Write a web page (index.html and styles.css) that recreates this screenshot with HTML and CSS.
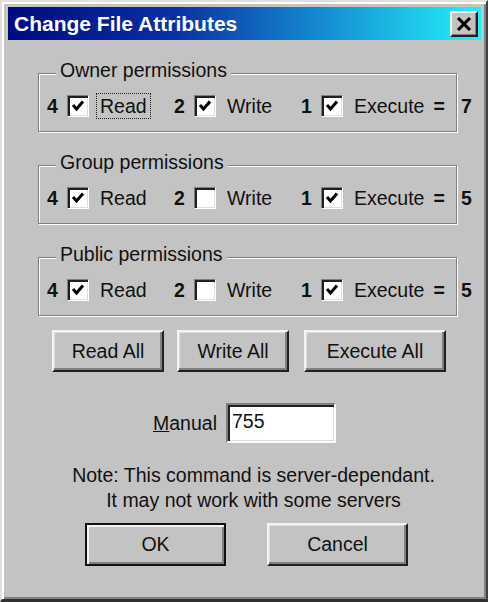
FILE: index.html
```html
<!DOCTYPE html>
<html lang="en">

<head>
    <meta charset="UTF-8">
    <meta name="viewport" content="width=device-width, initial-scale=1.0">
    <title>Change File Attributes</title>
    <link rel="stylesheet" href="styles.css">
</head>

<body>
    <div class="window">
        <div class="titlebar">
            <span class="title">Change File Attributes</span>
            <button class="close" aria-label="Close">
                <svg width="16" height="14" viewBox="0 0 16 14">
                    <path d="M2 1 L14 13 M14 1 L2 13" stroke="#000" stroke-width="3" fill="none" />
                </svg>
            </button>
        </div>

        <div class="group-row">
            <fieldset class="group">
                <legend>Owner permissions</legend>
                <div class="perms">
                    <div class="perm"><b>4</b><span class="check on"></span><span class="label focus">Read</span></div>
                    <div class="perm"><b>2</b><span class="check on"></span><span class="label">Write</span></div>
                    <div class="perm"><b>1</b><span class="check on"></span><span class="label">Execute</span><b class="eq">=</b></div>
                </div>
            </fieldset>
            <b class="total">7</b>
        </div>

        <div class="group-row">
            <fieldset class="group">
                <legend>Group permissions</legend>
                <div class="perms">
                    <div class="perm"><b>4</b><span class="check on"></span><span class="label">Read</span></div>
                    <div class="perm"><b>2</b><span class="check"></span><span class="label">Write</span></div>
                    <div class="perm"><b>1</b><span class="check on"></span><span class="label">Execute</span><b class="eq">=</b></div>
                </div>
            </fieldset>
            <b class="total">5</b>
        </div>

        <div class="group-row">
            <fieldset class="group">
                <legend>Public permissions</legend>
                <div class="perms">
                    <div class="perm"><b>4</b><span class="check on"></span><span class="label">Read</span></div>
                    <div class="perm"><b>2</b><span class="check"></span><span class="label">Write</span></div>
                    <div class="perm"><b>1</b><span class="check on"></span><span class="label">Execute</span><b class="eq">=</b></div>
                </div>
            </fieldset>
            <b class="total">5</b>
        </div>

        <div class="all-buttons">
            <button class="btn short">Read All</button>
            <button class="btn short">Write All</button>
            <button class="btn long">Execute All</button>
        </div>

        <div class="manual">
            <label for="mode"><u>M</u>anual</label>
            <input type="text" id="mode" value="755">
        </div>

        <p class="note">Note: This command is server-dependant.<br>It may not work with some servers</p>

        <div class="actions">
            <button class="btn wide default">OK</button>
            <button class="btn wide">Cancel</button>
        </div>
    </div>
</body>

</html>
```

FILE: styles.css
```css
body {
    margin: 0;
    background-color: #c3c3c3;
    font-family: "Liberation Sans", Arial, sans-serif;
    font-size: 19.5px;
    color: #111;
}

.window {
    width: 488px;
    height: 602px;
    box-sizing: border-box;
    background-color: #c3c3c3;
    border-style: solid;
    border-width: 2px 2px 3px 2px;
    border-color: #dfdfdf #404040 #303030 #dfdfdf;
    box-shadow: inset 2px 2px 0 #fff, inset -2px -2px 0 #808080;
    padding: 5px 5px 0 6px;
    display: flex;
    flex-direction: column;
}

.titlebar {
    height: 33px;
    display: flex;
    align-items: center;
    justify-content: space-between;
    padding: 0 3px 0 6px;
    background: linear-gradient(90deg, #000a80 0%, #0a30a0 35%, #1690d4 68%, #24f2f8 100%);
}

.title {
    color: #fff;
    font-weight: bold;
    font-size: 21px;
}

.close {
    width: 28px;
    height: 26px;
    padding: 0;
    display: flex;
    align-items: center;
    justify-content: center;
    background-color: #c3c3c3;
    border: 2px solid;
    border-color: #f4f4f4 #202020 #202020 #f4f4f4;
    box-shadow: inset -1px -1px 0 #808080;
}

.group-row {
    display: grid;
    grid-template-columns: 419px 1fr;
    margin-left: 30px;
    margin-top: 20px;
}

.group-row:first-of-type {
    margin-top: 18px;
}

.group {
    margin: 0;
    padding: 9px 0 14px 8px;
    border: 1px solid #808080;
    box-shadow: 1px 1px 0 #fff, inset 1px 1px 0 #fff;
}

.group legend {
    padding: 0 4px 6px 4px;
    margin-left: 9px;
    line-height: 20px;
    background-color: #c3c3c3;
}

.perms {
    display: flex;
    height: 22px;
    align-items: center;
}

.perm {
    width: 127px;
    display: flex;
    align-items: center;
    flex-shrink: 0;
}

.perm:last-child {
    width: auto;
}

.perm b {
    width: 20px;
    flex-shrink: 0;
}

.check {
    width: 22px;
    height: 22px;
    box-sizing: border-box;
    background-color: #fff;
    border: 1px solid;
    border-color: #808080 #fff #fff #808080;
    box-shadow: inset 2px 2px 0 #202020, inset -1px -1px 0 #dfdfdf;
    flex-shrink: 0;
}

.check.on {
    background: #fff url("data:image/svg+xml,%3Csvg xmlns='http://www.w3.org/2000/svg' width='20' height='20'%3E%3Cpath d='M5 9 L8.5 13 L15 5.5' stroke='%23000' stroke-width='3' fill='none'/%3E%3C/svg%3E") no-repeat center;
}

.label {
    margin-left: 7px;
    padding: 1px 3px;
    border: 1px dotted transparent;
    line-height: 22px;
}

.label.focus {
    border-color: #222;
}

.perm .eq {
    width: auto;
    margin-left: 5px;
}

.total {
    padding: 35px 0 0 4px;
    line-height: 22px;
}

.all-buttons {
    display: flex;
    gap: 13px;
    padding-left: 44px;
    margin-top: 14px;
}

.btn {
    height: 42px;
    padding: 0;
    font-family: inherit;
    font-size: 19.5px;
    color: #111;
    background-color: #c3c3c3;
    border: 2px solid;
    border-color: #f4f4f4 #202020 #202020 #f4f4f4;
    box-shadow: inset -2px -2px 0 #808080, inset 1px 1px 0 #dfdfdf;
}

.short {
    width: 112px;
}

.long {
    width: 142px;
    margin-left: 2px;
}

.manual {
    display: flex;
    align-items: center;
    justify-content: center;
    gap: 9px;
    margin-top: 31px;
}

.manual input {
    width: 110px;
    height: 40px;
    box-sizing: border-box;
    margin: 0;
    padding: 0 0 4px 4px;
    font-family: inherit;
    font-size: 19.5px;
    color: #111;
    background-color: #fff;
    border: 2px solid;
    border-color: #808080 #fff #fff #808080;
    box-shadow: inset 2px 2px 0 #202020, inset -1px -1px 0 #dfdfdf;
    outline: none;
}

.note {
    margin: 20px 0 0 0;
    padding-left: 18px;
    text-align: center;
    line-height: 25px;
}

.actions {
    display: flex;
    gap: 41px;
    padding-left: 77px;
    margin-top: 10px;
}

.wide {
    width: 141px;
    height: 43px;
}

.default {
    border-color: #111;
    box-shadow: inset 2px 2px 0 #f4f4f4, inset -2px -2px 0 #808080;
}
```
